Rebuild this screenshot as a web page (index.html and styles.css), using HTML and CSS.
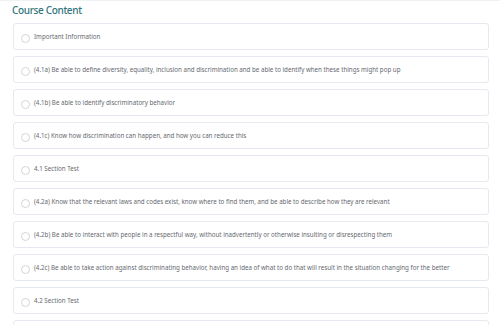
FILE: index.html
```html
<!DOCTYPE html>
<html lang="en">
<head>
    <meta charset="UTF-8">
    <meta name="viewport" content="width=device-width, initial-scale=1.0">
    <title>Course Content</title>
    <link rel="stylesheet" href="styles.css">
</head>
<body>
    <div class="page">
        <h2 class="title">Course Content</h2>
        <ul class="lessons">
            <li class="lesson"><span class="radio"></span><span class="label">Important Information</span></li>
            <li class="lesson"><span class="radio"></span><span class="label">(4.1a) Be able to define diversity, equality, inclusion and discrimination and be able to identify when these things might pop up</span></li>
            <li class="lesson"><span class="radio"></span><span class="label">(4.1b) Be able to identify discriminatory behavior</span></li>
            <li class="lesson"><span class="radio"></span><span class="label">(4.1c) Know how discrimination can happen, and how you can reduce this</span></li>
            <li class="lesson"><span class="radio"></span><span class="label">4.1 Section Test</span></li>
            <li class="lesson"><span class="radio"></span><span class="label">(4.2a) Know that the relevant laws and codes exist, know where to find them, and be able to describe how they are relevant</span></li>
            <li class="lesson"><span class="radio"></span><span class="label">(4.2b) Be able to interact with people in a respectful way, without inadvertently or otherwise insulting or disrespecting them</span></li>
            <li class="lesson"><span class="radio"></span><span class="label">(4.2c) Be able to take action against discriminating behavior, having an idea of what to do that will result in the situation changing for the better</span></li>
            <li class="lesson"><span class="radio"></span><span class="label">4.2 Section Test</span></li>
            <li class="lesson"></li>
        </ul>
    </div>
</body>
</html>
```

FILE: styles.css
```css
/* page */
body {
    margin: 0;
    padding: 0;
    background-color: #ffffff;
    font-family: "Noto Sans", Arial, sans-serif;
}

.page {
    border-top: 1px solid #f1f2f4;
    padding: 0 11px 0 13px;
}

.title {
    margin: 3px 0 7px -1px;
    font-size: 10px;
    font-weight: 500;
    letter-spacing: -0.35px;
    line-height: 12px;
    color: #33747a;
}

.lessons {
    list-style: none;
    margin: 0;
    padding: 0;
    display: flex;
    flex-direction: column;
    gap: 6px;
}

.lesson {
    display: flex;
    align-items: center;
    height: 25px;
    padding: 0 7px;
    border: 1px solid #e6e9ef;
    border-radius: 3px;
    background: #fff;
}

.radio {
    flex: none;
    width: 7px;
    height: 7px;
    margin-top: 3px;
    border: 1px solid #d3d5d9;
    border-radius: 50%;
}

.label {
    margin-left: 4px;
    margin-bottom: 1px;
    font-size: 6.2px;
    color: #66696f;
    white-space: nowrap;
}
```
